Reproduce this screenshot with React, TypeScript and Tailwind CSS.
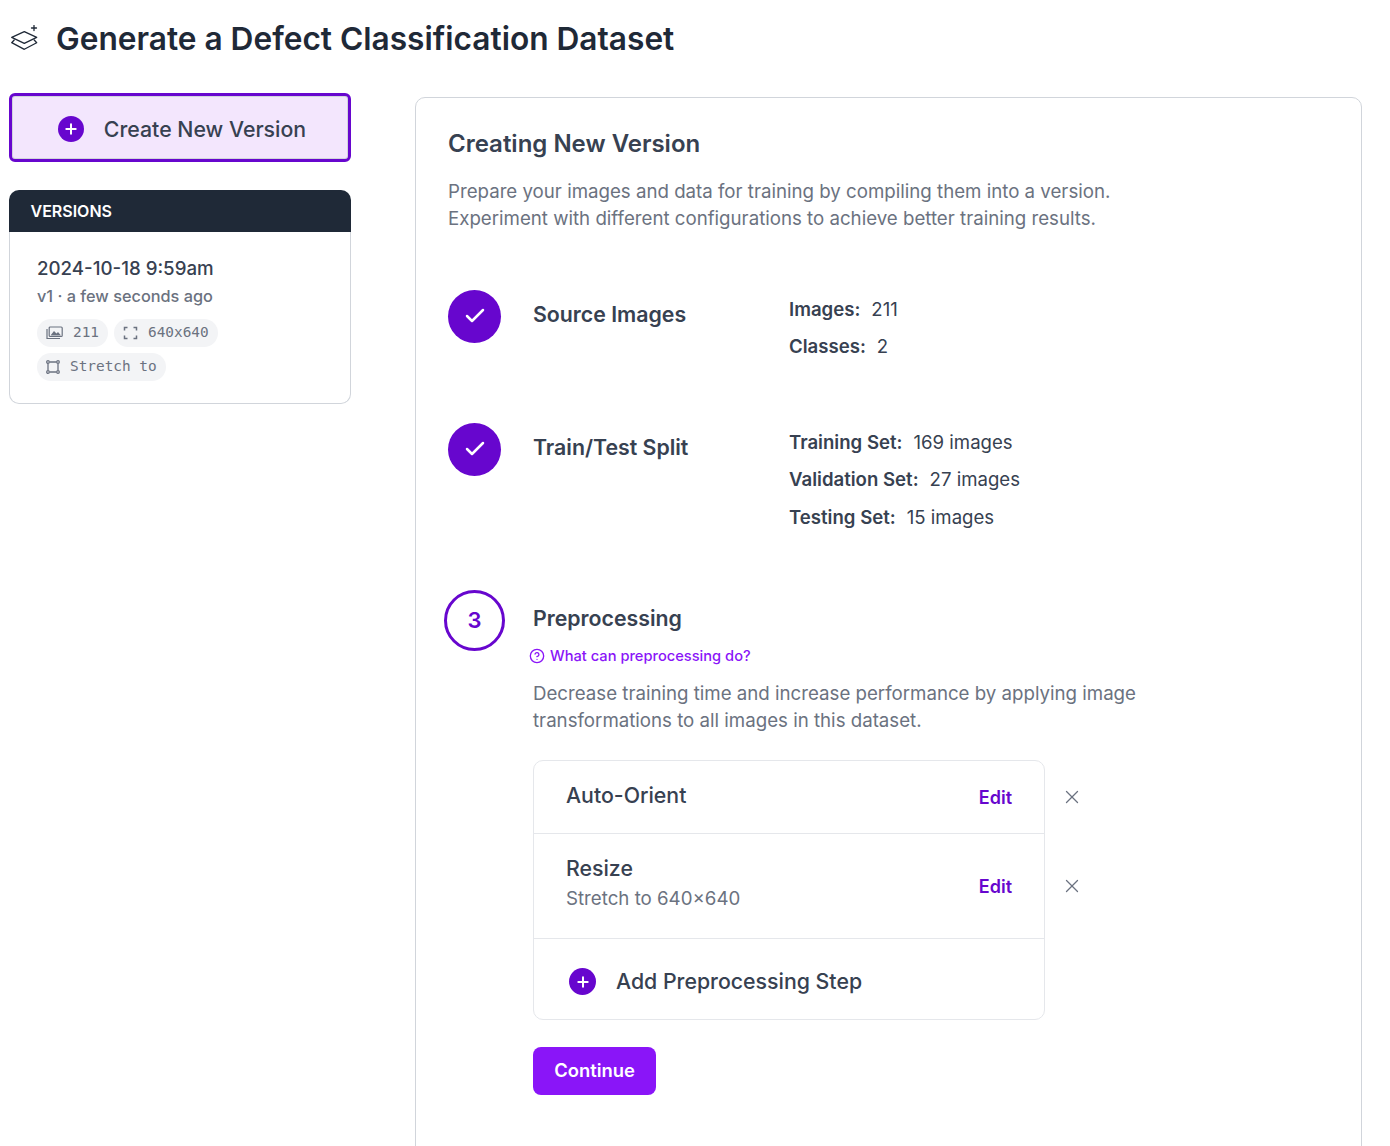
import { Check, Plus, X, CircleHelp } from "lucide-react";

const PURPLE_DARK = "bg-[#6706ce]";

function StatLine({ label, value }: { label: string; value: string }) {
  return (
    <p className="text-[18.6px] leading-[27px] mb-[10.4px] text-[#374151]">
      <span className="font-semibold">{label}:</span>
      <span className="ml-[11px]">{value}</span>
    </p>
  );
}

function DoneStep({ title, stats, className }: { title: string; stats: { label: string; value: string }[]; className: string }) {
  return (
    <div className={`flex ${className}`}>
      <div className={`flex h-[53px] w-[53px] shrink-0 items-center justify-center rounded-full ${PURPLE_DARK}`}>
        <Check className="-mt-[1px] h-[24px] w-[24px] text-white" strokeWidth={2.5} />
      </div>
      <h3 className="ml-[32px] mt-[8px] w-[256px] text-[21.3px] leading-[33px] font-semibold text-[#374151]">{title}</h3>
      <div className="mt-[6px]">
        {stats.map((s) => (
          <StatLine key={s.label} label={s.label} value={s.value} />
        ))}
      </div>
    </div>
  );
}

function Chip({ icon, text }: { icon: React.ReactNode; text: string }) {
  return (
    <span className="inline-flex h-[28px] items-center gap-[10px] rounded-full bg-[#f3f4f6] px-[9px] font-['DejaVu_Sans_Mono',monospace] text-[14.4px] text-[#6b7280]">
      {icon}
      {text}
    </span>
  );
}

function PlusDot({ className }: { className: string }) {
  return (
    <span className={`flex shrink-0 items-center justify-center rounded-full ${PURPLE_DARK} ${className}`}>
      <Plus className="h-[16px] w-[16px] text-white" strokeWidth={3} />
    </span>
  );
}

function StepRow({ title, sub, className }: { title: string; sub?: string; className: string }) {
  return (
    <div className={`flex items-center border-b border-[#e5e7eb] px-[32px] ${className}`}>
      <div className={`flex-1 ${sub ? "-mt-[6px]" : "-mt-[2px]"}`}>
        <p className="text-[21.3px] leading-[33px] font-medium text-[#374151]">{title}</p>
        {sub && <p className="text-[18.7px] leading-[28px] text-[#6b7280]">{sub}</p>}
      </div>
      <span className="mt-[2px] text-[18px] font-semibold text-[#6706ce]">Edit</span>
    </div>
  );
}

export default function App() {
  return (
    <div className="h-[1146px] overflow-hidden bg-white font-['Inter',sans-serif]">
      <div className="flex h-[78px] items-center pl-[10px]">
        <svg className="mt-[2px]" width="30" height="30" viewBox="0 0 30 30" fill="none" stroke="#1f2937" strokeWidth="1.3" strokeLinejoin="round" strokeLinecap="round">
          <path d="M1.700 12.300 14.300 6.700l12.400 5.600-12.400 6z" />
          <path d="M4.200 15 1.700 17.700l12.600 6.600 12.400-6.600-2.500-2.700" />
          <path d="M24 .5v5M21.500 3h5" />
        </svg>
        <h1 className="ml-[16px] text-[31.65px] font-semibold leading-[40px] text-[#1f2937]">Generate a Defect Classification Dataset</h1>
      </div>
      <div className="flex">
        <aside className="ml-[9px] mt-[15px] w-[342px] shrink-0">
          <button className="flex h-[69px] w-full items-center justify-center gap-[20px] rounded-[6px] border-[3px] border-[#6706ce] bg-[#f3e6fd] pl-[4px] pt-[3px] text-[21.3px] font-medium text-[#374151] shadow-[inset_0_0_0_1px_#d1d5db]">
            <PlusDot className="-mt-[1px] h-[26px] w-[26px]" />
            <span className="mt-[2px]">Create New Version</span>
          </button>
          <div className="mt-[28px]">
            <div className="flex h-[42px] items-center rounded-t-[10px] bg-[#1f2937] pl-[21.500px] text-[16px] font-semibold text-white">VERSIONS</div>
            <div className="h-[172px] rounded-b-[10px] border border-t-0 border-[#d1d5db] px-[27px] pt-[24px]">
              <p className="text-[18.7px] leading-[26px] font-medium text-[#374151]">2024-10-18 9:59am</p>
              <p className="mt-[2px] text-[16.3px] leading-[24px] font-medium text-[#6b7280]">v1 · a few seconds ago</p>
              <div className="mt-[11px] flex flex-wrap gap-x-[6px] gap-y-[6px]">
                <Chip
                  icon={
                    <svg width="17" height="14" viewBox="0 0 17 14" fill="none" stroke="currentColor" strokeWidth="1.200">
                      <path d="M1 3v9.500h13" />
                      <rect x="3.200" y="1" width="13" height="9.500" rx="1" />
                      <path d="M4.500 9.500 8 5l2.500 2.500L12 6l3 3.500z" fill="currentColor" stroke="none" />
                    </svg>
                  }
                  text="211"
                />
                <Chip
                  icon={
                    <svg width="15" height="14" viewBox="0 0 15 14" fill="none" stroke="currentColor" strokeWidth="1.500">
                      <path d="M1.500 4.500v-3h3M10.500 1.500h3v3M13.500 9.500v3h-3M4.500 12.500h-3v-3" />
                    </svg>
                  }
                  text="640x640"
                />
                <Chip
                  icon={
                    <svg width="14" height="14" viewBox="0 0 14 14" fill="none" stroke="currentColor" strokeWidth="1.300">
                      <path d="M3.500 2h7M3.500 12h7M2 3.500v7M12 3.500v7" />
                      <circle cx="2" cy="2" r="1.300" />
                      <circle cx="12" cy="2" r="1.300" />
                      <circle cx="2" cy="12" r="1.300" />
                      <circle cx="12" cy="12" r="1.300" />
                    </svg>
                  }
                  text="Stretch to"
                />
              </div>
            </div>
          </div>
        </aside>
        <main className="ml-[64px] mt-[19px] h-[1200px] w-[947px] rounded-[10px] border border-[#d1d5db] px-[32px] pt-[28px]">
          <h2 className="text-[24px] leading-[36px] font-semibold text-[#374151]">Creating New Version</h2>
          <p className="mt-[16px] text-[18.68px] leading-[27px] text-[#6b7280]">
            Prepare your images and data for training by compiling them into a version.
            <br />
            Experiment with different configurations to achieve better training results.
          </p>
          <DoneStep
            className="mt-[58px]"
            title="Source Images"
            stats={[
              { label: "Images", value: "211" },
              { label: "Classes", value: "2" },
            ]}
          />
          <DoneStep
            className="mt-[52px]"
            title="Train/Test Split"
            stats={[
              { label: "Training Set", value: "169 images" },
              { label: "Validation Set", value: "27 images" },
              { label: "Testing Set", value: "15 images" },
            ]}
          />
          <div className="mt-[49px] flex">
            <div className="-ml-[4px] flex h-[61px] w-[61px] shrink-0 items-center justify-center rounded-full border-[3px] border-[#6706ce] text-[22px] font-semibold text-[#6706ce]">3</div>
            <div className="ml-[28px]">
              <h3 className="mt-[12px] text-[21.3px] leading-[33px] font-semibold text-[#374151]">Preprocessing</h3>
              <a className="mt-[11px] -ml-[4px] flex items-center gap-[5px] text-[14.66px] leading-[20px] font-medium text-[#8a15f8]">
                <CircleHelp className="h-[16px] w-[16px]" />
                What can preprocessing do?
              </a>
              <p className="mt-[14px] w-[640px] text-[18.68px] leading-[27px] text-[#6b7280]">
                Decrease training time and increase performance by applying image transformations to all images in this dataset.
              </p>
              <div className="mt-[26px] flex">
                <div className="w-[512px] rounded-[10px] border border-[#e5e7eb]">
                  <StepRow className="h-[73px]" title="Auto-Orient" />
                  <StepRow className="h-[105px]" title="Resize" sub="Stretch to 640×640" />
                  <div className="flex h-[80px] items-center pl-[35px] pt-[6px]">
                    <PlusDot className="h-[27px] w-[27px]" />
                    <span className="ml-[20px] text-[21.3px] font-medium text-[#374151]">Add Preprocessing Step</span>
                  </div>
                </div>
                <div className="ml-[16px] flex flex-col text-[#6b7280]">
                  <X className="mt-[26px] h-[22px] w-[22px]" strokeWidth={1.4} />
                  <X className="mt-[67px] h-[22px] w-[22px]" strokeWidth={1.4} />
                </div>
              </div>
              <button className="mt-[27px] h-[48px] w-[123px] rounded-[8px] bg-[#8a15f8] text-[18.4px] font-semibold text-white">Continue</button>
            </div>
          </div>
        </main>
      </div>
    </div>
  );
}
